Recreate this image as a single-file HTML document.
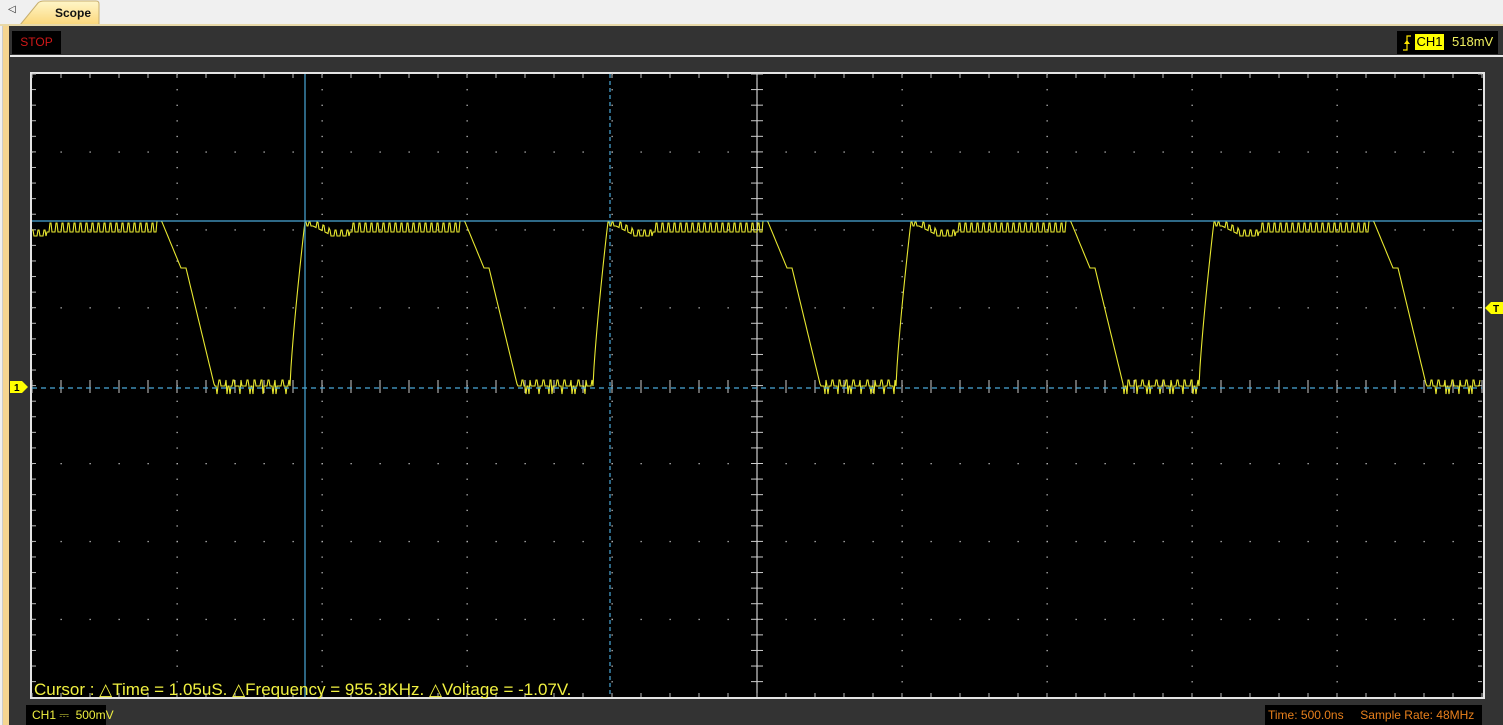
<!DOCTYPE html>
<html><head><meta charset="utf-8">
<style>
html,body{margin:0;width:1503px;height:725px;overflow:hidden}
body{background:#f0f0f0;font-family:"Liberation Sans",Arial,sans-serif;position:relative}
.abs{position:absolute;white-space:nowrap}
</style></head><body>
<div class="abs" style="left:0;top:0;width:1503px;height:24px;background:#f0f0f0"></div>
<div class="abs" style="left:8px;top:4px;font-size:10px;color:#222">&#9665;</div>
<svg class="abs" style="left:18px;top:0" width="84" height="26"><defs><linearGradient id="tg" x1="0" y1="0" x2="0" y2="1"><stop offset="0" stop-color="#fff6c8"/><stop offset="1" stop-color="#fbd77a"/></linearGradient></defs><path d="M2 25 L20 3 Q22 1 26 1 L78 1 Q81 1 81 4 L81 25 Z" fill="url(#tg)" stroke="#c8b070"/><text x="37" y="17" font-family="Liberation Sans" font-weight="bold" font-size="12" fill="#111">Scope</text></svg>
<div class="abs" style="left:0;top:24px;width:1503px;height:2px;background:#e8d9a8"></div>
<div class="abs" style="left:2px;top:26px;width:8px;height:699px;background:#f5d590;border-left:1px solid #ccc"></div>
<div class="abs" style="left:9px;top:26px;width:1494px;height:699px;background:#333"></div>
<div class="abs" style="left:12px;top:31px;width:49px;height:23px;background:#000;color:#d01818;font-size:12px;line-height:23px;text-align:center">STOP</div>
<div class="abs" style="left:1397px;top:31px;width:101px;height:23px;background:#000"></div>
<svg class="abs" style="left:1400px;top:33px" width="20" height="20"><path d="M3 17 H7 V3 H11" stroke="#ffe600" stroke-width="1.2" fill="none"/><path d="M4 11 L7 7 L10 11 Z" fill="#ffe600"/></svg>
<div class="abs" style="left:1415px;top:34px;width:29px;height:16px;background:#ffff00;color:#000;font-size:13px;line-height:16px;text-align:center">CH1</div>
<div class="abs" style="left:1452px;top:34px;color:#f0f060;font-size:13px;line-height:16px">518mV</div>
<div class="abs" style="left:10px;top:55px;width:1493px;height:2px;background:#e8e8e8"></div>
<div class="abs" style="left:30px;top:72px;width:1451px;height:623px;border:2px solid #e4e4e4;background:#000"></div>
<svg class="abs" style="left:0;top:0" width="1503" height="725" id="sv"></svg>
<div class="abs" style="left:34px;top:680px;color:#f0f040;font-size:17px;line-height:20px">Cursor : △Time = 1.05uS. △Frequency = 955.3KHz. △Voltage = -1.07V.</div>
<div class="abs" style="left:26px;top:705px;width:80px;height:20px;background:#000;color:#f0f040;font-size:12px;line-height:20px;padding-left:6px;box-sizing:border-box">CH1 ⎓ &nbsp;500mV</div>
<div class="abs" style="left:1265px;top:705px;width:217px;height:20px;background:#000;color:#e8801c;font-size:12px;line-height:20px;padding-left:3px;box-sizing:border-box">Time: 500.0ns &nbsp;&nbsp;&nbsp;&nbsp;Sample Rate: 48MHz</div>
<svg class="abs" style="left:10px;top:380px" width="20" height="14"><path d="M0 1 H12 L18 7 L12 13 H0 Z" fill="#ffff00"/><text x="4" y="11" font-size="10" font-weight="bold" font-family="Liberation Sans" fill="#000">1</text></svg>
<svg class="abs" style="left:1484px;top:301px" width="19" height="14"><path d="M19 1 H7 L1 7 L7 13 H19 Z" fill="#ffff00"/><text x="9" y="11" font-size="10" font-weight="bold" font-family="Liberation Sans" fill="#000">T</text></svg>
<script>
var s='',X0=32,X1=1482,Y0=74,Y1=697,cx=757,cy=386;
var dx=145,dy=77.9;
function ln(a,b,c,d,col,w,da){s+='<line x1="'+a+'" y1="'+b+'" x2="'+c+'" y2="'+d+'" stroke="'+col+'" stroke-width="'+(w||1)+'"'+(da?' stroke-dasharray="'+da+'"':'')+'/>';}
function dot(x,y){s+='<rect x="'+(x-0.5)+'" y="'+(y-0.5)+'" width="1.3" height="1.3" fill="#bbb"/>';}
for(var i=1;i<10;i++){var x=X0+i*dx;if(i==5)continue;for(var y=Y0;y<Y1;y+=dy/5)dot(x,y);}
for(var j=1;j<8;j++){var y=Y0+j*dy;if(j==4)continue;for(var x=X0;x<X1;x+=dx/5)dot(x,y);}
ln(cx,Y0,cx,Y1,'#cfcfcf',1.2);
for(var x=X0;x<=X1;x+=dx/5){ln(x,cy-6,x,cy+7,'#ccc',1);ln(x,Y0,x,Y0+4,'#bbb',1);ln(x,Y1-4,x,Y1,'#bbb',1);}
for(var y=Y0;y<=Y1;y+=dy/5){ln(cx-6,y,cx+6,y,'#ccc',1);ln(X0,y,X0+4,y,'#bbb',1);ln(X1-4,y,X1,y,'#bbb',1);}
var P=303,xr=305,pts=[];
function saw(t,base,amp){return (Math.floor(t)%6<2)?base-amp:base;}
function wy(t,x){
 if(t<8)return 222+(Math.floor(t)%4<2?0:4);
 if(t<25)return saw(t,226+(t-8)*0.5,6);
 if(t<45)return saw(t,236,6);
 if(t<155)return saw(t,232,9);
 if(t<160)return 221;
 if(t<179)return 222+(t-160)*46/19;
 if(t<184)return 268;
 if(t<213)return 268+(t-184)*120/29;
 if(t<288){var m=Math.floor(x*7)%23;return 386+(m<3?8:(Math.floor(t)%7<2?-6:0));}
 var u=(t-288)/15;return 386-165*Math.pow(u,0.8);
}
for(var x=X0;x<=X1-2;x+=1){var r=x-xr;var k=Math.floor(r/P);var t=r-k*P;pts.push(x+','+wy(t,x).toFixed(1));}
s+='<polyline points="'+pts.join(' ')+'" fill="none" stroke="#e8e830" stroke-width="1.1"/>';
ln(305,Y0,305,Y1,'#4aa8d8',1.2);ln(X0,221,X1,221,'#4aa8d8',1.2);
ln(610,Y0,610,Y1,'#4aa8d8',1.2,'4,3');ln(X0,388,X1,388,'#4aa8d8',1.2,'5,4');
document.getElementById('sv').innerHTML=s;
</script>
</body></html>
